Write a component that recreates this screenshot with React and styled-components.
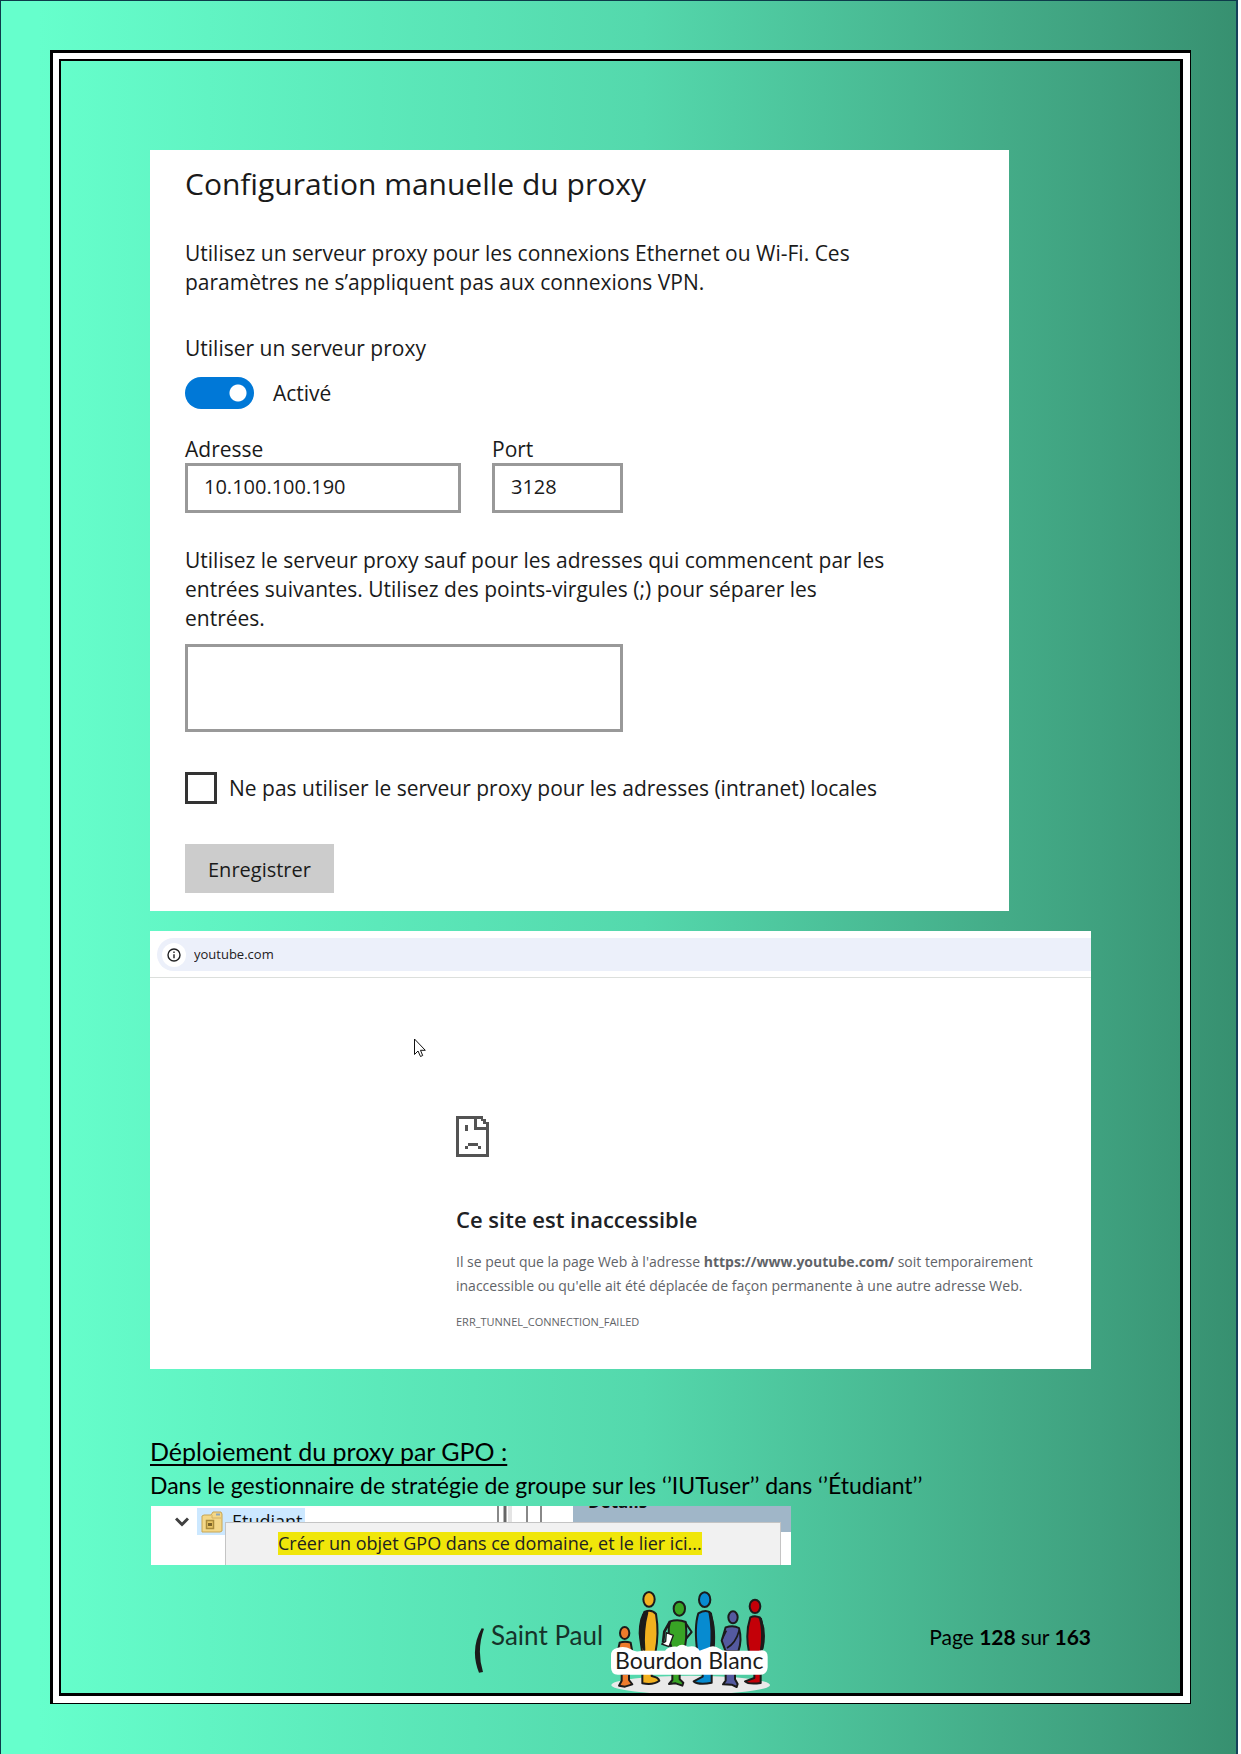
import React from "react";
import styled, { createGlobalStyle, css } from "styled-components";

const ui = `"Open Sans", "Noto Sans", sans-serif`;
const doc = `Lato, "Open Sans", sans-serif`;

const GlobalStyle = createGlobalStyle`
  *, *::before, *::after { box-sizing: border-box; }
  body { margin: 0; background: #fff; }
  h1, h2, p { margin: 0; font-weight: 400; }
  svg { display: block; flex: none; }
`;

const Sheet = styled.div`
  display: flex;
  min-height: 100vh;
  margin-right: 3px;
  padding: 49px 45px 50px 49px;
  border: 1px solid #0d3b4a;
  border-right: 2px solid #14405a;
  border-bottom: 0;
  background: linear-gradient(90deg, #66ffcc 0%, #66ffcc 3%, #54d8ac 52%, #44ac88 81%, #3fa17f 89%, #379070 100%);
`;

const OuterRule = styled.div`
  display: flex;
  flex: 1;
  border: solid #000;
  border-width: 3px 1px 1px 3px;
`;

const WhiteBand = styled.div`
  display: flex;
  flex: 1;
  border: solid #fff;
  border-width: 6px 7px 7px 6px;
`;

const Body = styled.main`
  display: flex;
  flex: 1;
  flex-direction: column;
  align-items: flex-start;
  padding: 89px 89px 0;
  border: solid #000;
  border-width: 2px 3px 3px 2px;
`;

const SettingsCard = styled.form`
  width: 100%;
  max-width: 859px;
  padding: 14px 35px 18px;
  background: #fff;
  color: #1a1a1a;
  font: 21px/29px ${ui};
`;

const SettingsTitle = styled.h1`
  margin-bottom: 35px;
  font-size: 30px;
  line-height: 40px;
`;

const Text = styled.p`
  display: block;
`;

const SwitchLabel = styled.label`
  display: block;
  margin: 37px 0 14px;
`;

const SwitchRow = styled.div`
  display: flex;
  align-items: center;
  gap: 19px;
  margin-bottom: 26px;
`;

const Switch = styled.input`
  appearance: none;
  width: 69px;
  height: 32px;
  margin: 0;
  border-radius: 16px;
  background: radial-gradient(circle at 53px 16px, #fff 8px, #0078d7 9px);
`;

const Fields = styled.div`
  display: flex;
  gap: 31px;
  margin-bottom: 33px;
`;

const Field = styled.label`
  display: flex;
  flex-direction: column;
  width: ${(p) => p.$width};
  line-height: 28px;
`;

const box = css`
  display: block;
  border: 3px solid #999;
  border-radius: 0;
  background: #fff;
  color: #1a1a1a;
  font: 20px ${ui};
`;

const TextBox = styled.input`
  ${box}
  width: 100%;
  height: 50px;
  padding: 0 16px 4px;
`;

const Exceptions = styled.textarea`
  ${box}
  width: 438px;
  height: 88px;
  margin: 11px 0 40px;
  resize: none;
`;

const CheckRow = styled.label`
  display: flex;
  align-items: center;
  gap: 12px;
  margin-bottom: 40px;
`;

const Check = styled.input`
  appearance: none;
  width: 32px;
  height: 32px;
  margin: 0;
  border: 3px solid #333;
  background: #fff;
`;

const SaveButton = styled.button`
  display: block;
  height: 49px;
  padding: 1px 23px 0;
  border: 0;
  background: #ccc;
  color: #1a1a1a;
  font: 20px ${ui};
`;

const BrowserCard = styled.section`
  position: relative;
  width: 100%;
  margin-top: 20px;
  background: #fff;
  color: #5f6368;
  font-family: ${ui};
`;

const Toolbar = styled.div`
  padding: 7px 0 6px 7px;
  border-bottom: 1px solid #dcdfdc;
`;

const AddressBar = styled.label`
  display: flex;
  align-items: center;
  gap: 8px;
  height: 33px;
  padding-left: 5px;
  border-radius: 17px 0 0 17px;
  background: #ecf0fa;
`;

const Address = styled.input`
  flex: 1;
  height: 24px;
  padding: 0 0 2px;
  border: 0;
  background: transparent;
  color: #1f2022;
  font: 13px ${ui};
`;

const ErrorPage = styled.div`
  padding: 138px 32px 37px 306px;
`;

const ErrorTitle = styled.h2`
  margin: 47px 0 16px;
  color: #202124;
  font-size: 22px;
  font-weight: 600;
  line-height: 30px;
`;

const ErrorText = styled.p`
  font-size: 14px;
  line-height: 24px;
`;

const ErrorCode = styled.p`
  margin-top: 14px;
  font-size: 11px;
  line-height: 20px;
`;

const Cursor = styled.svg`
  position: absolute;
  left: 263px;
  top: 107px;
`;

const SectionTitle = styled.h2`
  margin-top: 65px;
  color: #000;
  font: 25px/34px ${doc};
  text-decoration: underline;
  text-decoration-thickness: 2px;
  text-underline-offset: 3px;
  text-decoration-skip-ink: none;
`;

const Lead = styled.p`
  color: #000;
  font: 23px/34px ${doc};
  font-variant-ligatures: none;
`;

const Console = styled.section`
  position: relative;
  display: flex;
  justify-content: space-between;
  width: 640px;
  height: 59px;
  margin: 4px 0 0 1px;
  overflow: hidden;
  background: #fff;
  font-family: ${ui};
`;

const TreeRow = styled.div`
  display: flex;
  align-items: center;
  gap: 8px;
  height: 27px;
  margin: 2px 0 0 24px;
`;

const TreeItem = styled.span`
  display: flex;
  align-items: center;
  gap: 9px;
  height: 27px;
  padding: 0 3px 0 4px;
  background: #cce8ff;
  color: #111;
  font-size: 18px;
  line-height: 27px;
`;

const Splitter = styled.svg`
  margin-left: auto;
`;

const Details = styled.div`
  width: 218px;
  height: 26px;
  padding-left: 15px;
  background: #a0b6c8;
  color: #111;
  font-size: 17px;
  font-weight: 700;
  line-height: 0;
`;

const DetailsTitle = styled.span`
  display: block;
  margin-top: -4px;
`;

const Menu = styled.div`
  position: absolute;
  left: 74px;
  top: 16px;
  width: 556px;
  height: 50px;
  padding: 9px 0 0 52px;
  border: 1px solid #c4c4c4;
  background: #f1f1f1;
`;

const MenuItem = styled.button`
  display: block;
  height: 23px;
  padding: 0;
  border: 0;
  background: #f0e60a;
  color: #222;
  font: 18px/23px ${ui};
  white-space: nowrap;
`;

const Footer = styled.footer`
  display: grid;
  grid-template-columns: 1fr auto 1fr;
  width: 100%;
  margin-top: auto;
  padding-top: 24px;
`;

const PageNumber = styled.p`
  grid-column: 3;
  justify-self: end;
  padding-top: 32px;
  color: #000;
  font: 21px/30px ${doc};
`;

const Logo = styled.svg`
  grid-column: 2;
`;

const InfoIcon = () => (
  <svg width="24" height="24" viewBox="0 0 24 24" aria-hidden="true">
    <circle cx="12" cy="12" r="12" fill="#fff" />
    <circle cx="12" cy="12" r="6" fill="none" stroke="#1f2022" strokeWidth="1.4" />
    <path d="M12 11.2v4M12 8.4v1.5" stroke="#1f2022" strokeWidth="1.4" />
  </svg>
);

const SadPage = () => (
  <svg width="33" height="41" viewBox="0 0 33 41" fill="#535353" aria-hidden="true">
    <path d="M0 0H27V3H30V6H33V41H0ZM3 3V38H30V14H18V3ZM21 3V11H30V8H27V5H25V3Z" fillRule="evenodd" />
    <path d="M9 9h3v6H9zM12 27h10v3H12zM9 30h3v3H9zM22 30h3v3h-3z" />
  </svg>
);

const Arrow = () => (
  <Cursor width="14" height="20" viewBox="0 0 14 20" aria-hidden="true">
    <path d="M1.5 1V16.5L5 13L7.5 18.5L9.7 17.5L7.5 12.3H12.3Z" fill="#fff" stroke="#111" strokeWidth="1" />
  </Cursor>
);

const Chevron = () => (
  <svg width="14" height="10" viewBox="0 0 14 10" aria-hidden="true">
    <path d="M1 1.5L7 7.5L13 1.5" fill="none" stroke="#404040" strokeWidth="3" />
  </svg>
);

const Folder = () => (
  <svg width="22" height="22" viewBox="0 0 22 22" aria-hidden="true">
    <path d="M1 5L3 4H10L12 1H20L21 3V20L19 21H1Z" fill="#f3d788" stroke="#c9a550" />
    <path d="M15 3.5H19" stroke="#8ea6b8" strokeWidth="2" />
    <path d="M11 4V7H20" fill="none" stroke="#d3b062" />
    <path d="M5.5 9.5H12.5V17.5H5.5Z" fill="#e9c565" stroke="#a98a3a" strokeWidth="1.5" />
    <path d="M7 12H11V15H7Z" fill="#7c6428" />
  </svg>
);

const SchoolLogo = () => (
  <Logo width="300" height="103" viewBox="18 30 900 309" role="img" aria-label="Saint Paul Bourdon Blanc">
    <ellipse cx="677" cy="315" rx="238" ry="28" fill="#e9e9e9" />
    <path d="M50 145Q14 208 42 278L54 276Q34 210 57 146Z" fill="#1b1b1b" />
    <g stroke="#1b1b1b" strokeWidth="6" strokeLinejoin="round">
      <g fill="#ee7b2c">
        <ellipse cx="479" cy="159" rx="14" ry="18" />
        <path d="M464 188Q480 182 497 188L502 216H458Z" />
        <path d="M470 282V302L462 317L480 320L502 313L492 300V282Z" />
      </g>
      <g fill="#f2b11f">
        <ellipse cx="552" cy="58" rx="17" ry="22" />
        <path d="M538 96Q560 86 573 102Q583 160 571 220H532Q518 150 538 96Z" />
        <path d="M532 278V310Q566 316 583 302Q580 292 560 288V278Z" />
      </g>
      <path d="M540 96Q525 110 524 160Q526 190 538 210Q533 150 547 98Z" fill="#1b1b1b" />
      <path d="M661 128L680 156L660 180" fill="none" />
      <g fill="#38a425">
        <ellipse cx="643" cy="86" rx="17" ry="21" />
        <path d="M615 124Q640 116 662 126Q668 180 656 212H622Q604 160 615 124Z" />
        <path d="M622 280V300L612 312L632 310L652 317L655 308L644 298V280Z" />
      </g>
      <path d="M615 124L598 155L594 188" fill="none" strokeWidth="8" />
      <path d="M604 158L625 166L612 200L590 192L602 184Z" fill="#fff" strokeWidth="4" />
      <g fill="#078bd0">
        <ellipse cx="719" cy="59" rx="17" ry="22" />
        <path d="M700 100Q725 86 738 100Q750 160 738 216H697Q687 140 700 100Z" />
        <path d="M713 278V290L686 304Q702 316 740 308V278Z" />
      </g>
      <path d="M733 96Q752 130 746 206L737 214Q744 150 733 96Z" fill="#1b1b1b" />
      <g fill="#545aa0">
        <ellipse cx="804" cy="112" rx="14" ry="18" />
        <path d="M782 142Q805 134 822 144Q832 180 820 214H782L770 182Z" />
        <path d="M782 280V302L774 313L800 314L815 321L818 312L810 298V280Z" />
      </g>
      <path d="M823 150Q812 190 786 204M772 176L784 152" fill="none" strokeWidth="5" />
      <g fill="#c30008">
        <ellipse cx="870" cy="79" rx="16" ry="20" />
        <path d="M856 112Q874 104 888 116Q900 160 888 216H852Q840 160 856 112Z" />
        <path d="M868 280V294L840 304Q850 314 887 309V280Z" />
      </g>
      <path d="M884 112Q904 150 893 204L888 212Q896 150 884 112Z" fill="#1b1b1b" />
    </g>
    <path
      d="M456 204Q478 196 498 208Q510 218 530 212H600Q612 198 636 200Q650 188 668 200Q694 194 704 212Q720 206 726 204Q746 192 764 206Q772 214 790 212H880Q908 206 908 230V262Q906 286 884 284H462Q438 286 438 262V226Q438 208 456 204Z"
      fill="#fff"
    />
    <text x="78" y="194" fontFamily={doc} fontSize="78" fill="#16332a">Saint Paul</text>
    <text x="450" y="266" fontFamily={doc} fontSize="69" fill="#1b1b1b">Bourdon Blanc</text>
  </Logo>
);

export default function App() {
  return (
    <>
      <GlobalStyle />
      <Sheet>
        <OuterRule>
          <WhiteBand>
            <Body>
              <SettingsCard onSubmit={(e) => e.preventDefault()}>
                <SettingsTitle>Configuration manuelle du proxy</SettingsTitle>
                <Text>
                  Utilisez un serveur proxy pour les connexions Ethernet ou Wi-Fi. Ces
                  <br />
                  paramètres ne s’appliquent pas aux connexions VPN.
                </Text>
                <SwitchLabel htmlFor="proxy">Utiliser un serveur proxy</SwitchLabel>
                <SwitchRow>
                  <Switch id="proxy" type="checkbox" role="switch" defaultChecked />
                  <span>Activé</span>
                </SwitchRow>
                <Fields>
                  <Field $width="276px">
                    Adresse
                    <TextBox type="text" defaultValue="10.100.100.190" />
                  </Field>
                  <Field $width="131px">
                    Port
                    <TextBox type="text" defaultValue="3128" />
                  </Field>
                </Fields>
                <Text as="label" htmlFor="exceptions">
                  Utilisez le serveur proxy sauf pour les adresses qui commencent par les
                  <br />
                  entrées suivantes. Utilisez des points-virgules (;) pour séparer les
                  <br />
                  entrées.
                </Text>
                <Exceptions id="exceptions" />
                <CheckRow>
                  <Check type="checkbox" />
                  Ne pas utiliser le serveur proxy pour les adresses (intranet) locales
                </CheckRow>
                <SaveButton type="submit">Enregistrer</SaveButton>
              </SettingsCard>

              <BrowserCard>
                <Toolbar>
                  <AddressBar>
                    <InfoIcon />
                    <Address type="text" aria-label="Adresse du site" defaultValue="youtube.com" />
                  </AddressBar>
                </Toolbar>
                <Arrow />
                <ErrorPage>
                  <SadPage />
                  <ErrorTitle>Ce site est inaccessible</ErrorTitle>
                  <ErrorText>
                    Il se peut que la page Web à l'adresse <strong>https://www.youtube.com/</strong> soit temporairement
                    <br />
                    inaccessible ou qu'elle ait été déplacée de façon permanente à une autre adresse Web.
                  </ErrorText>
                  <ErrorCode>ERR_TUNNEL_CONNECTION_FAILED</ErrorCode>
                </ErrorPage>
              </BrowserCard>

              <SectionTitle>Déploiement du proxy par GPO :</SectionTitle>
              <Lead>Dans le gestionnaire de stratégie de groupe sur les ‘’IUTuser’’ dans ‘’Étudiant’’</Lead>

              <Console>
                <TreeRow>
                  <Chevron />
                  <TreeItem>
                    <Folder />
                    Etudiant
                  </TreeItem>
                </TreeRow>
                <Splitter width="76" height="18" viewBox="0 0 76 18" aria-hidden="true">
                  <path d="M1 0V18M30 0V18M44 0V18" stroke="#888" strokeWidth="2" />
                  <path d="M8 0V18" stroke="#666" strokeWidth="3" />
                  <path d="M13 0V18" stroke="#e4e4e4" strokeWidth="4" />
                </Splitter>
                <Details>
                  <DetailsTitle>Détails</DetailsTitle>
                </Details>
                <Menu>
                  <MenuItem type="button">Créer un objet GPO dans ce domaine, et le lier ici...</MenuItem>
                </Menu>
              </Console>

              <Footer>
                <SchoolLogo />
                <PageNumber>
                  Page <b>128</b> sur <b>163</b>
                </PageNumber>
              </Footer>
            </Body>
          </WhiteBand>
        </OuterRule>
      </Sheet>
    </>
  );
}
